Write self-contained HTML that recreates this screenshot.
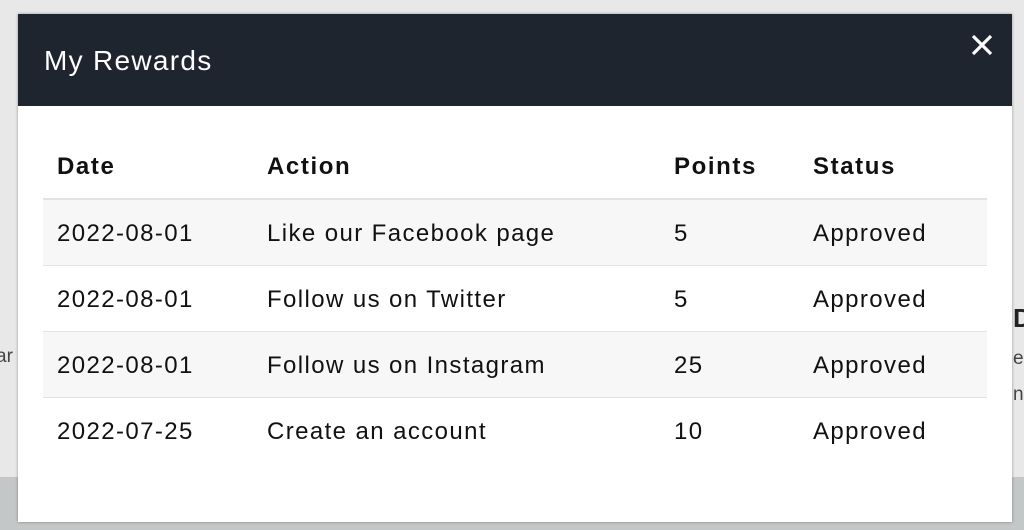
<!DOCTYPE html>
<html><head><style>
body{margin:0;width:1024px;height:530px;background:#e8e8e8;position:relative;overflow:hidden;font-family:"Liberation Sans",sans-serif;}
.bg1{position:absolute;left:0;top:477px;width:1024px;height:53px;background:#c4c7c7;}
.bgt{position:absolute;color:#444;font-size:19px;}
.modal{position:absolute;left:18px;top:14px;width:994px;height:508px;background:#fff;box-shadow:0 0 3px rgba(0,0,0,.35);}
.hdr{height:92px;background:#1f252e;color:#fff;font-size:28px;line-height:94px;padding-left:26px;position:relative;letter-spacing:1.3px;}
.x{position:absolute;left:953px;top:20px;}
table{position:absolute;left:25px;top:132px;width:944px;border-collapse:collapse;font-size:24px;color:#111;letter-spacing:1.4px;}
th{text-align:left;font-weight:bold;height:52px;padding:0 0 0 14px;border-bottom:2px solid #e2e2e2;vertical-align:top;line-height:42px;letter-spacing:1.6px;}
td{height:66px;padding:4px 0 0 14px;box-sizing:border-box;border-bottom:1px solid #e2e2e2;}
tr.g td{background:#f7f7f7;}
tr.last td{border-bottom:none;}
</style></head><body>
<div class="bg1"></div>
<div class="bgt" style="left:-4px;top:346px">ar</div>
<div class="bgt" style="left:1013px;top:303px;font-weight:bold;font-size:26px;color:#222">D</div>
<div class="bgt" style="left:1013px;top:348px">e</div>
<div class="bgt" style="left:1013px;top:384px">ne</div>
<div class="modal">
<div class="hdr">My Rewards
<svg class="x" width="22" height="22" viewBox="0 0 22 22"><path d="M2 2L20 20M20 2L2 20" stroke="#fff" stroke-width="3.2"/></svg></div>
<table>
<tr><th style="width:196px">Date</th><th style="width:393px">Action</th><th style="width:125px">Points</th><th>Status</th></tr>
<tr class="g"><td>2022-08-01</td><td>Like our Facebook page</td><td>5</td><td>Approved</td></tr>
<tr><td>2022-08-01</td><td>Follow us on Twitter</td><td>5</td><td>Approved</td></tr>
<tr class="g"><td>2022-08-01</td><td>Follow us on Instagram</td><td>25</td><td>Approved</td></tr>
<tr class="last"><td>2022-07-25</td><td>Create an account</td><td>10</td><td>Approved</td></tr>
</table>
</div>
</body></html>
